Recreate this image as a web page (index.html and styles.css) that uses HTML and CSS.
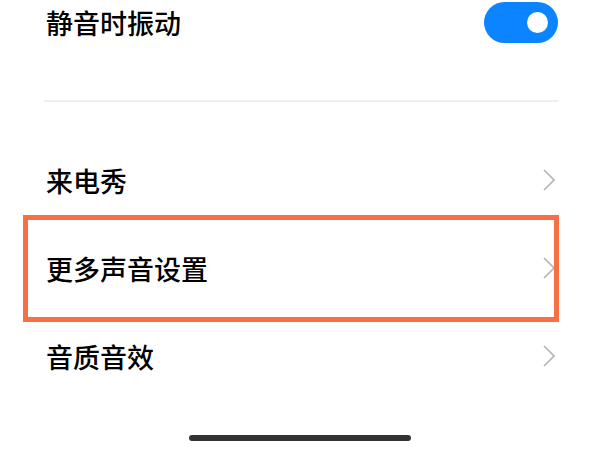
FILE: index.html
```html
<!DOCTYPE html>
<html lang="zh">
<head>
<meta charset="utf-8">
<link rel="stylesheet" href="styles.css">
</head>
<body>
<div class="screen">
  <div class="toggle-row">
    <span class="label">静音时振动</span>
    <span class="switch"><span class="knob"></span></span>
  </div>
  <div class="divider"></div>
  <div class="row">
    <span class="label">来电秀</span>
    <svg class="chev" width="12" height="22" viewBox="0 0 12 22"><path d="M1 1 L11 11 L1 21" fill="none" stroke="#b4b4b4" stroke-width="1.6"/></svg>
  </div>
  <div class="row highlighted">
    <span class="label">更多声音设置</span>
    <svg class="chev" width="12" height="22" viewBox="0 0 12 22"><path d="M1 1 L11 11 L1 21" fill="none" stroke="#b4b4b4" stroke-width="1.6"/></svg>
  </div>
  <div class="row">
    <span class="label">音质音效</span>
    <svg class="chev" width="12" height="22" viewBox="0 0 12 22"><path d="M1 1 L11 11 L1 21" fill="none" stroke="#b4b4b4" stroke-width="1.6"/></svg>
  </div>
  <div class="home-area"><div class="home-bar"></div></div>
</div>
</body>
</html>
```
FILE: styles.css
```css
html, body {
  margin: 0;
  padding: 0;
  background: #ffffff;
}
.screen {
  width: 600px;
  height: 450px;
  overflow: hidden;
  padding: 0 42px 0 46px;
  box-sizing: border-box;
  font-family: "Noto Sans CJK SC", "Noto Sans", sans-serif;
  color: #000000;
}
.label {
  font-size: 27px;
  font-weight: 500;
  line-height: 1;
  letter-spacing: 0;
}
.toggle-row {
  height: 45px;
  display: flex;
  align-items: center;
  justify-content: space-between;
}
.switch {
  width: 74px;
  height: 41px;
  border-radius: 21px;
  background: #0d84ff;
  display: flex;
  align-items: center;
  justify-content: flex-end;
  padding-right: 10px;
  box-sizing: border-box;
}
.knob {
  width: 21px;
  height: 21px;
  border-radius: 50%;
  background: #ffffff;
}
.divider {
  margin-top: 55px;
  margin-left: -2px;
  height: 2px;
  background: #eeeeee;
}
.row {
  height: 88px;
  display: flex;
  align-items: center;
  justify-content: space-between;
  position: relative;
}
.divider + .row {
  margin-top: 34px;
}
.chev {
  display: block;
  margin-right: 3px;
}
.highlighted::after {
  content: "";
  position: absolute;
  left: -23px;
  right: -1px;
  top: -9px;
  bottom: -10px;
  border: 5px solid #f76f42;
}
.home-area {
  margin-top: 35px;
  display: flex;
  justify-content: center;
  padding-right: 4px;
}
.home-bar {
  width: 222px;
  height: 6px;
  border-radius: 3px;
  background: #333333;
}
```
